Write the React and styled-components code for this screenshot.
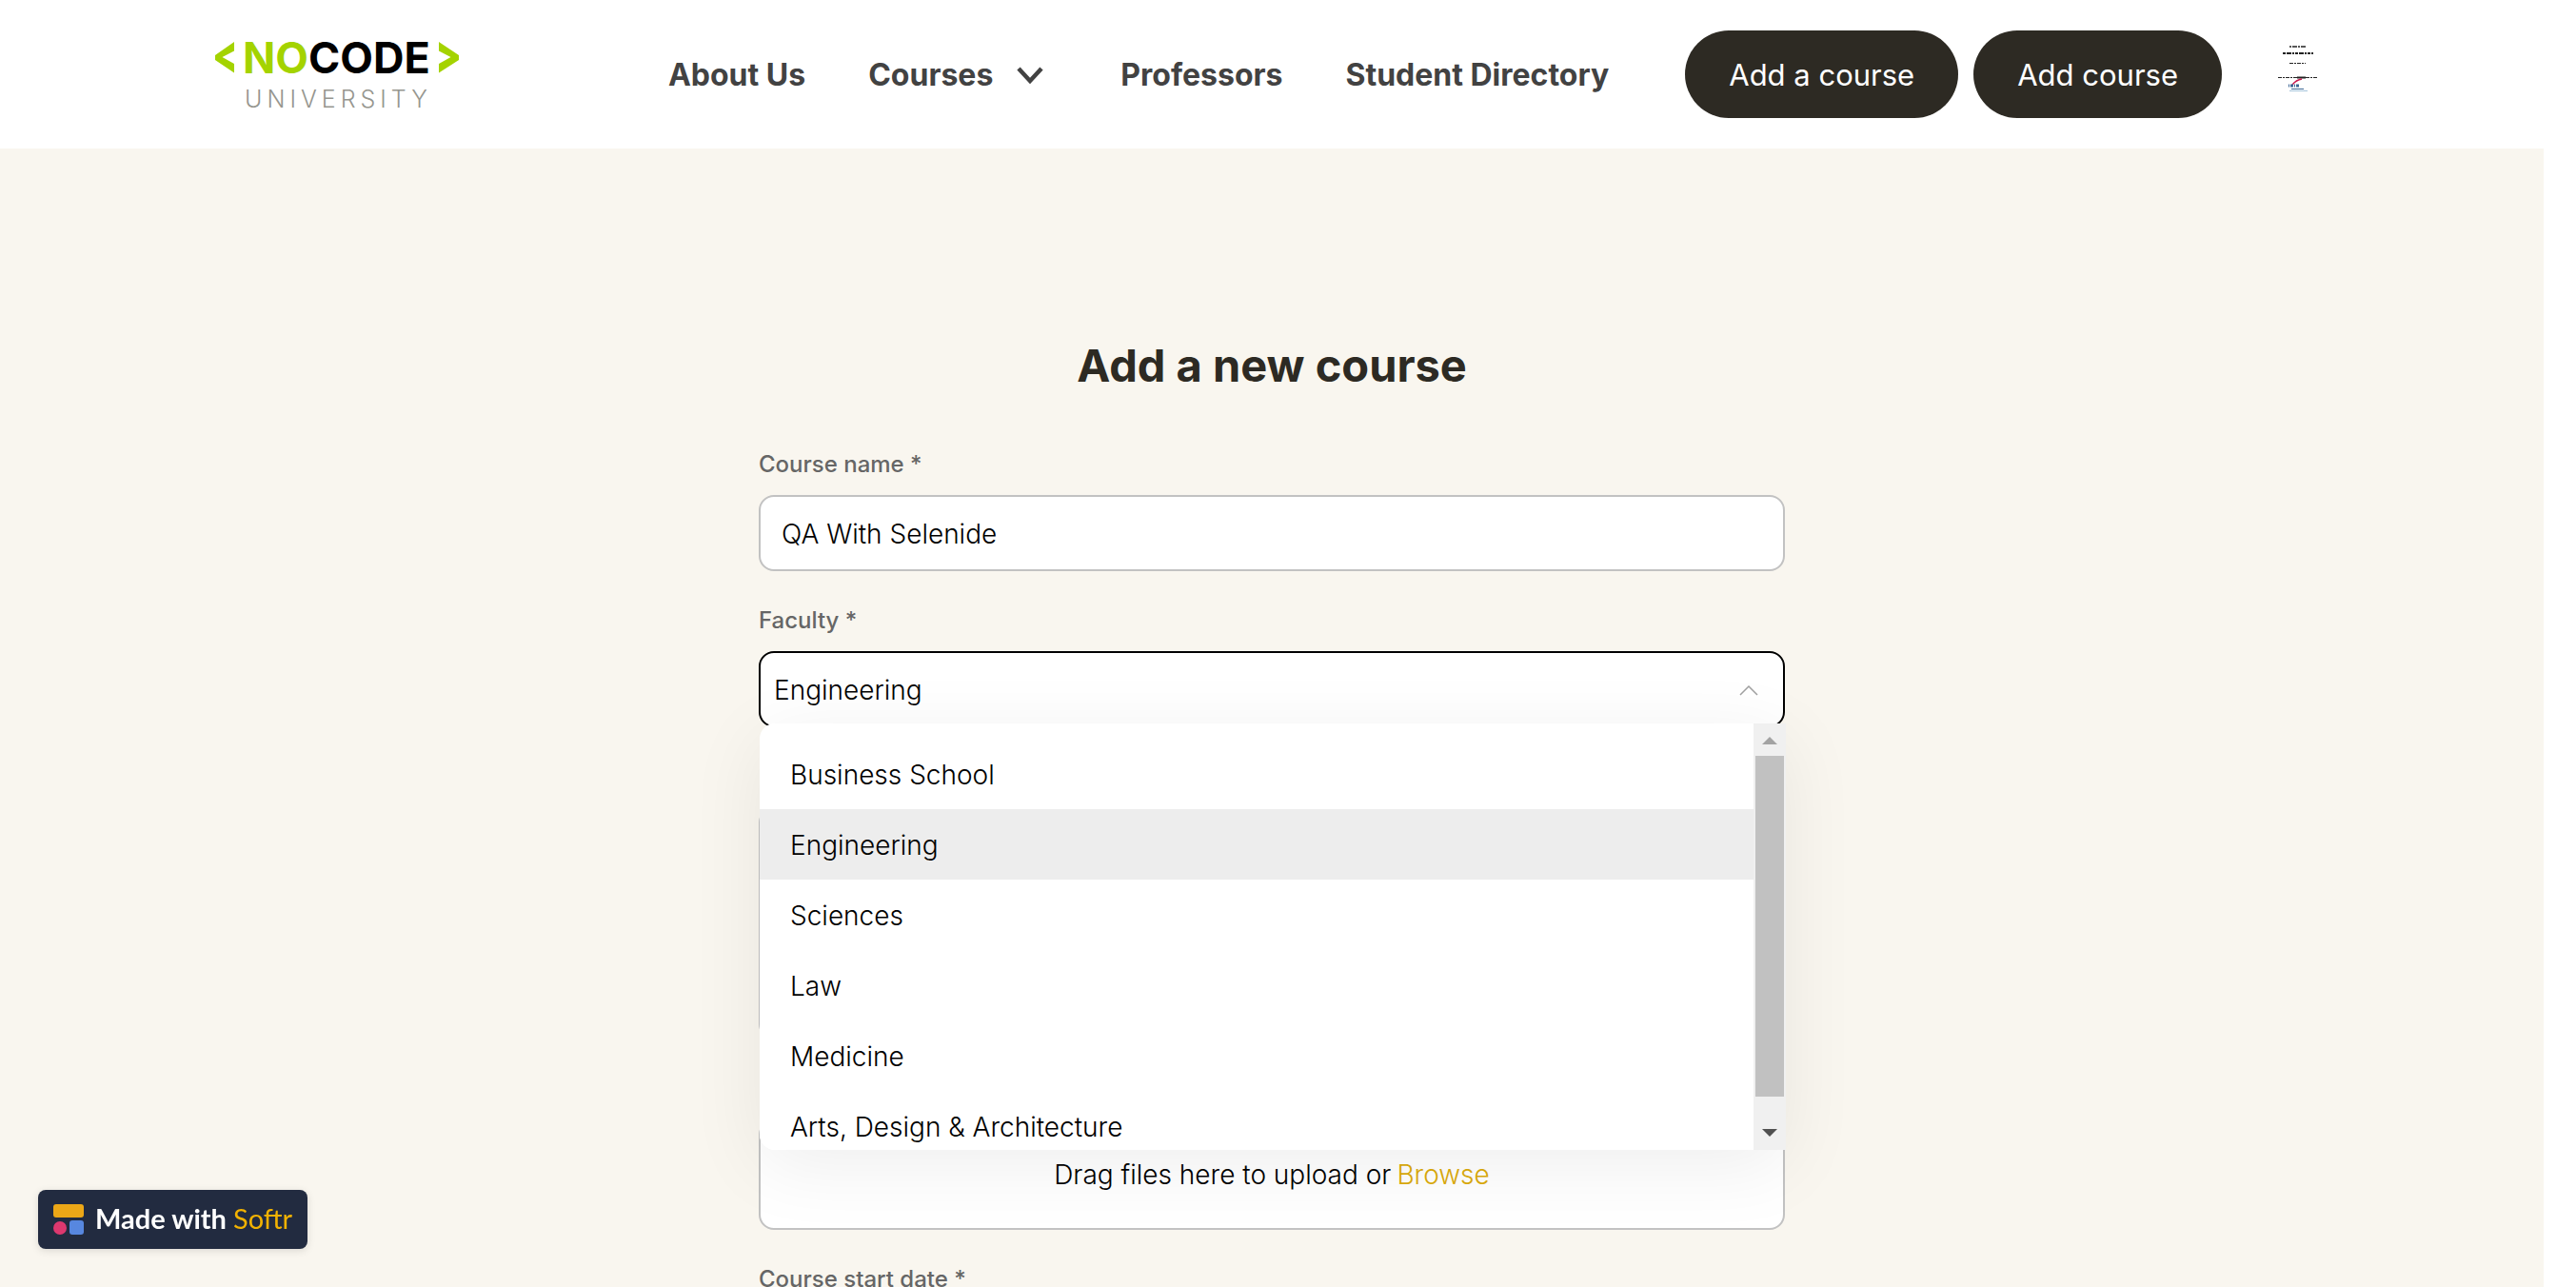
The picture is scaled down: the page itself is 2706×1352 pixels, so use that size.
import React, { useState } from "react";
import styled, { createGlobalStyle } from "styled-components";

const GlobalStyle = createGlobalStyle`
  *, *::before, *::after { box-sizing: border-box; }
  html, body { margin: 0; height: 100%; background: #fff; }
  body {
    overflow: hidden;
    font-family: Inter, "Open Sans", "Liberation Sans", sans-serif;
    color: #000;
  }
  button, input, textarea { font: inherit; }
`;

const Page = styled.div`
  display: flex;
  flex-direction: column;
  height: 100vh;
  margin-right: 34px;
  background: #f9f6ef;
  overflow: hidden;
`;

const Header = styled.header`
  display: flex;
  flex: none;
  align-items: center;
  justify-content: space-between;
  height: 156px;
  padding: 0 226px 0 224px;
  background: #fff;
`;

const LogoLink = styled.a`
  display: block;

  svg {
    display: block;
    overflow: visible;
  }
`;

const HeaderRight = styled.div`
  display: flex;
  align-items: center;
  gap: 80px;
`;

const Nav = styled.nav`
  display: flex;
  align-items: center;
  gap: 66px;
  padding-top: 2px;
`;

const NavLink = styled.a`
  display: flex;
  align-items: center;
  gap: 24px;
  font-size: 32px;
  line-height: 48px;
  font-weight: 700;
  color: #424242;
  text-decoration: none;
  white-space: nowrap;
`;

const Actions = styled.div`
  display: flex;
  align-items: center;
  gap: 16px;
`;

const PillButton = styled.button`
  height: 92px;
  padding: 0 46px;
  border: 0;
  border-radius: 46px;
  background: #2d2a23;
  color: #fff;
  font-size: 31px;
  font-weight: 400;
  white-space: nowrap;
`;

const Avatar = styled.button`
  display: block;
  width: 64px;
  height: 64px;
  margin-left: 32px;
  padding: 0;
  border: 0;
  background: #fff;

  svg {
    display: block;
  }
`;

const Main = styled.main`
  display: flex;
  flex-direction: column;
  align-items: center;
  padding: 192px 24px 0;
`;

const Form = styled.form`
  display: flex;
  flex-direction: column;
  gap: 32px;
  width: 100%;
  max-width: 1078px;
`;

const Title = styled.h1`
  margin: 0 0 16px;
  font-size: 47px;
  line-height: 72px;
  font-weight: 700;
  text-align: center;
  color: #2d2a23;
`;

const Field = styled.div`
  display: flex;
  flex-direction: column;
  gap: 12px;
  position: relative;
`;

const Label = styled.label`
  font-size: 24px;
  line-height: 40px;
  font-weight: 500;
  color: #666;
`;

const TextInput = styled.input`
  height: 80px;
  padding: 2px 22px 0;
  border: 2px solid #c2c2c2;
  border-radius: 16px;
  background: #fff;
  font-size: 28px;
  font-weight: 300;
  color: #000;
  outline: none;
`;

const TextArea = styled.textarea`
  height: 244px;
  padding: 22px;
  border: 2px solid #c2c2c2;
  border-radius: 16px;
  background: #fff;
  font-size: 28px;
  font-weight: 300;
  resize: none;
`;

const SelectButton = styled.button`
  display: flex;
  align-items: center;
  justify-content: space-between;
  height: 80px;
  padding: 2px 26px 0 14px;
  border: 2px solid #000;
  border-radius: 16px;
  background: #fff;
  font-size: 28px;
  font-weight: 300;
  color: #000;
`;

const Menu = styled.div`
  position: absolute;
  z-index: 2;
  top: 128px;
  left: 1px;
  right: -1px;
  display: flex;
  height: 448px;
  border-radius: 16px 0 0 16px;
  background: #fff;
  box-shadow: 0 16px 80px rgba(0, 0, 0, 0.07);
  overflow: hidden;
`;

const Options = styled.div`
  flex: 1;
  padding-top: 16px;
  overflow: hidden;
`;

const Option = styled.button`
  display: block;
  width: 100%;
  height: 74px;
  padding: 2px 32px 0;
  border: 0;
  background: ${(p) => (p.$selected ? "#ededed" : "#fff")};
  font-size: 28px;
  font-weight: 300;
  text-align: left;
  color: #000;
`;

const ScrollTrack = styled.div`
  display: flex;
  flex-direction: column;
  align-items: center;
  width: 34px;
  background: #f0f0f0;
`;

const ScrollThumb = styled.div`
  width: 30px;
  height: 358px;
  background: #c1c1c1;
`;

const ScrollArrow = styled.svg`
  flex: none;
  width: 34px;
  height: 34px;
  margin-top: ${(p) => (p.$end ? "auto" : "0")};
`;

const DropZone = styled.div`
  display: flex;
  align-items: center;
  justify-content: center;
  gap: 6px;
  height: 116px;
  border: 2px solid #c2c2c2;
  border-radius: 16px;
  background: #fff;
  font-size: 28px;
  font-weight: 300;
`;

const Browse = styled.button`
  padding: 0;
  border: 0;
  background: none;
  color: #dcab0b;
`;

const Badge = styled.a`
  position: fixed;
  left: 40px;
  bottom: 40px;
  display: flex;
  align-items: center;
  gap: 12px;
  height: 62px;
  padding: 0 16px;
  border-radius: 8px;
  background: #222b40;
  box-shadow: 0 2px 8px rgba(0, 0, 0, 0.12);
  font-family: Lato, "Open Sans", sans-serif;
  font-size: 29px;
  line-height: 36px;
  font-weight: 700;
  color: #fff;
  text-decoration: none;
  white-space: nowrap;
`;

const BadgeText = styled.span`
  padding-bottom: 2px;
`;

const Brand = styled.span`
  font-weight: 400;
  color: #f2b202;
`;

const faculties = [
  "Business School",
  "Engineering",
  "Sciences",
  "Law",
  "Medicine",
  "Arts, Design & Architecture",
];

function Logo() {
  return (
    <svg width="260" height="80" viewBox="0 0 260 80" role="img" aria-label="NoCode University">
      <path d="M22 6v9.500L9.500 22 22 29v9.500L2 25v-5z" fill="#a4d300" />
      <path d="M237 6v9.500L249.500 22 237 29v9.500L258 25v-5z" fill="#a4d300" />
      <text x="31" y="39" fontSize="45" fontWeight="700" fill="#a4d300">
        NO<tspan fill="#000">CODE</tspan>
      </text>
      <text x="33" y="75" fontSize="25" fontWeight="300" letterSpacing="5" fill="#96968f">
        UNIVERSITY
      </text>
    </svg>
  );
}

function DocumentThumb() {
  return (
    <svg width="64" height="64" viewBox="0 0 64 64" aria-hidden="true">
      <g fill="none" stroke="#222">
        <path d="M23 3h18" strokeDasharray="2 1 5 1" strokeWidth="1.500" />
        <path d="M16 10h32" strokeDasharray="3 1 5 1 2 1" strokeWidth="2" />
        <path d="M23 20.500h17" strokeDasharray="4 1 2 1" strokeWidth="1" />
        <path d="M11 35.500h20M40 35.500h13" strokeDasharray="4 1 2 1" strokeWidth="1" />
        <path d="M31 35.500h9" strokeWidth="2" />
      </g>
      <path d="M26 43q4-5 10-6" fill="none" stroke="#c9184f" strokeWidth="1.500" />
      <path d="M22 44h12" stroke="#3d6796" strokeWidth="3" strokeDasharray="1 1 3 1" />
      <path d="M25 47.500h13" stroke="#3d6796" />
      <path d="M23 49.500h19" stroke="#a7c5dc" />
    </svg>
  );
}

export default function App() {
  const [open, setOpen] = useState(true);
  const [faculty, setFaculty] = useState("Engineering");

  return (
    <>
      <GlobalStyle />
      <Page>
        <Header>
          <LogoLink href="#home"><Logo /></LogoLink>
          <HeaderRight>
            <Nav>
              <NavLink href="#about">About Us</NavLink>
              <NavLink href="#courses">
                Courses
                <svg width="44" height="20" viewBox="0 0 44 20" fill="none" aria-hidden="true">
                  <path d="M3 3l12 13L27 3" stroke="#424242" strokeWidth="4.500" />
                </svg>
              </NavLink>
              <NavLink href="#professors">Professors</NavLink>
              <NavLink href="#students">Student Directory</NavLink>
            </Nav>
            <Actions>
              <PillButton type="button">Add a course</PillButton>
              <PillButton type="button">Add course</PillButton>
              <Avatar type="button" aria-label="Account"><DocumentThumb /></Avatar>
            </Actions>
          </HeaderRight>
        </Header>
        <Main>
          <Form onSubmit={(e) => e.preventDefault()}>
            <Title>Add a new course</Title>
            <Field>
              <Label htmlFor="course-name">Course name *</Label>
              <TextInput id="course-name" type="text" defaultValue="QA With Selenide" />
            </Field>
            <Field>
              <Label htmlFor="faculty">Faculty *</Label>
              <SelectButton
                id="faculty"
                type="button"
                aria-haspopup="listbox"
                aria-expanded={open}
                onClick={() => setOpen(!open)}
              >
                {faculty}
                <svg width="20" height="12" viewBox="0 0 20 12" fill="none" aria-hidden="true">
                  <path d="M1 11l9-9 9 9" stroke="#a0a0a0" strokeWidth="1.500" />
                </svg>
              </SelectButton>
              {open && (
                <Menu>
                  <Options role="listbox" aria-label="Faculty">
                    {faculties.map((name) => (
                      <Option
                        key={name}
                        type="button"
                        role="option"
                        aria-selected={name === faculty}
                        $selected={name === faculty}
                        onClick={() => setFaculty(name)}
                      >
                        {name}
                      </Option>
                    ))}
                  </Options>
                  <ScrollTrack aria-hidden="true">
                    <ScrollArrow viewBox="0 0 34 34"><path d="M9 22l8-8 8 8z" fill="#a3a3a3" /></ScrollArrow>
                    <ScrollThumb />
                    <ScrollArrow $end viewBox="0 0 34 34"><path d="M9 12l8 8 8-8z" fill="#505050" /></ScrollArrow>
                  </ScrollTrack>
                </Menu>
              )}
            </Field>
            <Field>
              <Label as="span">&nbsp;</Label>
              <TextArea aria-label="Details" />
            </Field>
            <Field>
              <Label as="span">&nbsp;</Label>
              <DropZone>
                <span>Drag files here to upload or</span>
                <Browse type="button">Browse</Browse>
              </DropZone>
            </Field>
            <Field>
              <Label htmlFor="start-date">Course start date *</Label>
              <TextInput id="start-date" type="text" />
            </Field>
          </Form>
        </Main>
        <Badge href="#softr">
          <svg width="32" height="32" viewBox="0 0 32 32" aria-hidden="true">
            <rect width="32" height="14" rx="3" fill="#eca717" />
            <circle cx="7" cy="25" r="7" fill="#dc386f" />
            <rect x="17" y="17" width="15" height="15" rx="3" fill="#5787df" />
          </svg>
          <BadgeText>Made with <Brand>Softr</Brand></BadgeText>
        </Badge>
      </Page>
    </>
  );
}
